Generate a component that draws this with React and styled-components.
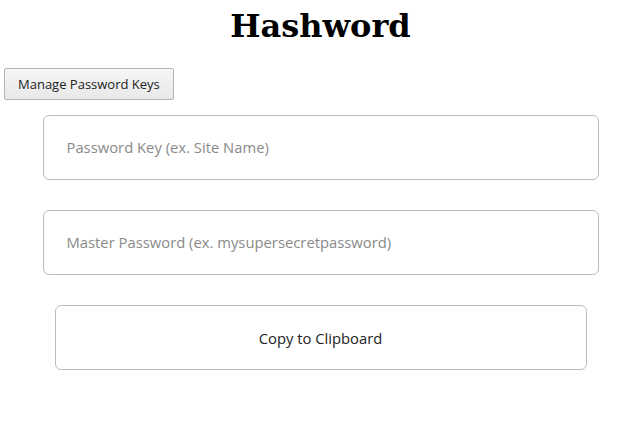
import styled, { createGlobalStyle } from "styled-components";

const GlobalStyle = createGlobalStyle`
  body {
    margin: 0;
    background: #fff;
    font-family: "Open Sans", sans-serif;
  }
`;

const App = () => {
  return (
    <>
      <GlobalStyle />
      <Page>
        <Title>Hashword</Title>
        <ManageButton>Manage Password Keys</ManageButton>
        <Form>
          <Field placeholder="Password Key (ex. Site Name)" />
          <Field placeholder="Master Password (ex. mysupersecretpassword)" />
          <CopyButton>Copy to Clipboard</CopyButton>
        </Form>
      </Page>
    </>
  );
};

const Page = styled.div`
  padding: 4px 4px 0 4px;
`;

const Title = styled.h1`
  margin: 0;
  padding-left: 6px;
  text-align: center;
  font-family: "DejaVu Serif", serif;
  font-weight: bold;
  font-size: 32px;
  line-height: 44px;
  color: #000;
`;

const ManageButton = styled.button`
  margin-top: 20px;
  height: 32px;
  padding: 0 13px;
  font-family: "Open Sans", sans-serif;
  font-size: 13px;
  color: #222;
  background: linear-gradient(#f6f6f6, #e8e8e8);
  border: 1px solid #b4b4b4;
  border-radius: 2px;
`;

const Form = styled.div`
  display: flex;
  flex-direction: column;
  align-items: center;
  gap: 30px;
  margin-top: 15px;
  padding-left: 6px;
`;

const Field = styled.input`
  box-sizing: border-box;
  width: 556px;
  height: 65px;
  padding: 0 23px 2px;
  font-family: "Open Sans", sans-serif;
  font-size: 14.8px;
  color: #222;
  background: #fff;
  border: 1px solid #bdbdbd;
  border-radius: 6px;
  outline: none;

  &::placeholder {
    color: #8a8a8a;
  }
`;

const CopyButton = styled.button`
  box-sizing: border-box;
  width: 532px;
  height: 65px;
  font-family: "Open Sans", sans-serif;
  font-size: 14.8px;
  color: #222;
  background: #fff;
  border: 1px solid #bdbdbd;
  border-radius: 6px;
`;

export default App;
